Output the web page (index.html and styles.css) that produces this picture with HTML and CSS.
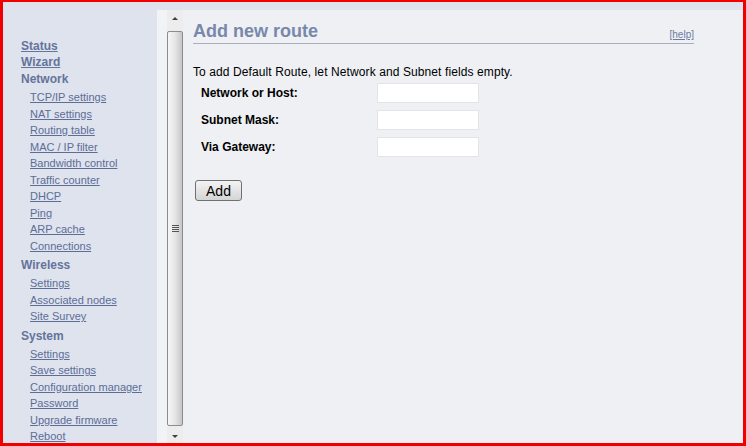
FILE: index.html
```html
<!DOCTYPE html>
<html lang="en">
<head>
    <meta charset="UTF-8">
    <title>Add new route</title>
    <link rel="stylesheet" href="styles.css">
</head>
<body>
    <div class="frame">
        <nav class="sidebar">
            <a class="top-link" href="#">Status</a>
            <a class="top-link" href="#">Wizard</a>
            <div class="group first">Network</div>
            <a class="link" href="#">TCP/IP settings</a>
            <a class="link" href="#">NAT settings</a>
            <a class="link" href="#">Routing table</a>
            <a class="link" href="#">MAC / IP filter</a>
            <a class="link" href="#">Bandwidth control</a>
            <a class="link" href="#">Traffic counter</a>
            <a class="link" href="#">DHCP</a>
            <a class="link" href="#">Ping</a>
            <a class="link" href="#">ARP cache</a>
            <a class="link" href="#">Connections</a>
            <div class="group">Wireless</div>
            <a class="link" href="#">Settings</a>
            <a class="link" href="#">Associated nodes</a>
            <a class="link" href="#">Site Survey</a>
            <div class="group">System</div>
            <a class="link" href="#">Settings</a>
            <a class="link" href="#">Save settings</a>
            <a class="link" href="#">Configuration manager</a>
            <a class="link" href="#">Password</a>
            <a class="link" href="#">Upgrade firmware</a>
            <a class="link" href="#">Reboot</a>
        </nav>

        <div class="panel">
            <div class="gutter"></div>
            <div class="scrollbar">
                <div class="arrow up"></div>
                <div class="thumb"><span class="grip"></span></div>
                <div class="arrow down"></div>
            </div>

            <main class="content">
                <div class="page-head">
                    <h1 class="title">Add new route</h1>
                    <a class="help" href="#">[help]</a>
                </div>

                <p class="intro">To add Default Route, let Network and Subnet fields empty.</p>

                <form class="route-form">
                    <label for="net">Network or Host:</label>
                    <input type="text" id="net">
                    <label for="mask">Subnet Mask:</label>
                    <input type="text" id="mask">
                    <label for="gw">Via Gateway:</label>
                    <input type="text" id="gw">
                </form>

                <button class="add-btn" type="button">Add</button>
            </main>
        </div>
    </div>
</body>
</html>
```

FILE: styles.css
```css
* {
    box-sizing: border-box;
    margin: 0;
    padding: 0;
}

html, body {
    height: 100%;
}

body {
    font-family: 'Liberation Sans', Arial, sans-serif;
    background-color: #dee3ed;
    color: #000;
}

.frame {
    height: 100%;
    display: flex;
    border: 3px solid #f20000;
    border-top-width: 2px;
    background-color: #dee3ed;
}

/* Menu lateral */
.sidebar {
    width: 154px;
    flex-shrink: 0;
    display: flex;
    flex-direction: column;
    align-items: flex-start;
    padding: 36px 0 0 18px;
}

.top-link,
.group {
    font-size: 12px;
    font-weight: bold;
    color: #64749b;
}

.top-link {
    line-height: 16px;
}

.group {
    line-height: 19px;
    margin-top: 2px;
}

.group.first {
    margin-top: 0;
}

.link {
    font-size: 11px;
    line-height: 16.5px;
    margin-left: 9px;
    color: #5d6d98;
}

/* Panel de contenido */
.panel {
    flex-grow: 1;
    display: flex;
    margin-top: 8px;
    background-color: #eef0f4;
}

.gutter {
    width: 10px;
    background-color: #f1f3f6;
}

.scrollbar {
    width: 16px;
    display: flex;
    flex-direction: column;
    background-color: #ededed;
}

.arrow {
    display: flex;
    justify-content: center;
    align-items: center;
}

.arrow.up {
    height: 17px;
}

.arrow.down {
    height: 13px;
}

.arrow::before {
    content: '';
    border-left: 3px solid transparent;
    border-right: 3px solid transparent;
}

.arrow.up::before {
    border-bottom: 3px solid #404040;
}

.arrow.down::before {
    border-top: 3px solid #404040;
}

.thumb {
    flex-grow: 1;
    margin: 4px 0;
    border: 1px solid #8c8c8c;
    border-radius: 2px;
    background: linear-gradient(to right, #f6f6f6, #e6e6e6 50%, #c6c6c6);
    display: flex;
    justify-content: center;
    align-items: center;
}

.grip {
    width: 7px;
    height: 7px;
    background: repeating-linear-gradient(to bottom, #555 0, #555 1px, transparent 1px, transparent 2px);
}

.content {
    padding: 10px 0 0 10px;
}

.page-head {
    width: 501px;
    display: flex;
    justify-content: space-between;
    align-items: flex-end;
    border-bottom: 1px solid #a7afc3;
    padding-bottom: 1px;
}

.title {
    font-size: 18px;
    line-height: 22px;
    color: #7888ab;
}

.help {
    font-size: 10px;
    line-height: 14px;
    color: #6b7ba0;
}

.intro {
    font-size: 12px;
    line-height: 14px;
    margin-top: 21px;
    letter-spacing: 0.1px;
}

.route-form {
    display: grid;
    grid-template-columns: 176px 102px;
    row-gap: 7px;
    align-items: center;
    margin: 4px 0 0 8px;
}

.route-form label {
    font-size: 12px;
    font-weight: bold;
}

.route-form input {
    height: 20px;
    border: 1px solid #e2e4e8;
    background-color: #fff;
}

.add-btn {
    margin: 23px 0 0 2px;
    width: 47px;
    height: 21px;
    font-family: 'Liberation Sans', Arial, sans-serif;
    font-size: 14px;
    color: #000;
    border: 1px solid #707070;
    border-radius: 3px;
    background: linear-gradient(to bottom, #f4f4f4, #e4e4e4 50%, #d4d4d4);
}
```
